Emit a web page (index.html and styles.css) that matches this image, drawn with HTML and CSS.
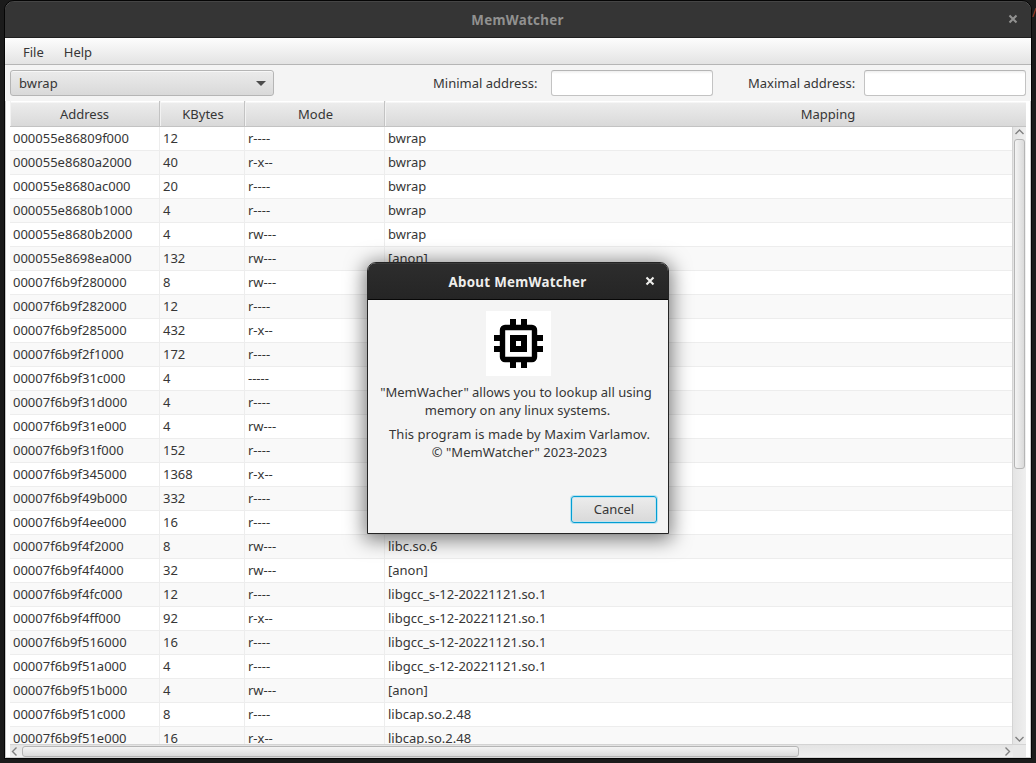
FILE: index.html
```html
<!DOCTYPE html>
<html lang="en">
<head>
<meta charset="utf-8">
<title>MemWatcher</title>
<link rel="stylesheet" href="styles.css">
</head>
<body>
<span class="backdrop-mark">/</span>
<main class="window">
  <header class="titlebar">
    <h1 class="title">MemWatcher</h1>
    <svg class="close" viewBox="0 0 10 10"><path d="M1.5 1.5L8.5 8.5M8.5 1.5L1.5 8.5"/></svg>
  </header>
  <nav class="menubar"><span class="menu-file">File</span><span>Help</span></nav>
  <section class="toolbar">
    <div class="combo">bwrap<i class="arrow"></i></div>
    <label class="min-label">Minimal address:</label><input class="field min-field">
    <label class="max-label">Maximal address:</label><input class="field max-field">
  </section>
  <section class="table">
    <div class="grid head"><div>Address</div><div>KBytes</div><div>Mode</div><div>Mapping</div></div>
    <div class="body">
      <div class="rows" id="rows"></div>
      <div class="vbar">
        <svg class="vchev" viewBox="0 0 13 12"><path d="M2.5 7L6.5 3L10.5 7"/></svg>
        <div class="vtrack"><div class="vthumb"></div></div>
        <svg class="vchev" viewBox="0 0 13 12"><path d="M2.5 5L6.5 9L10.5 5"/></svg>
      </div>
    </div>
    <div class="hbar">
      <svg class="hchev" viewBox="0 0 12 13"><path d="M6.5 2.5L2.5 6.5L6.5 10.5"/></svg>
      <div class="htrack"><div class="hthumb"></div></div>
      <svg class="hchev" viewBox="0 0 12 13"><path d="M4.5 2.5L8.5 6.5L4.5 10.5"/></svg>
      <div class="corner"></div>
    </div>
  </section>
</main>
<div class="dialog" role="dialog">
  <header class="dialog-title">
    <h2 class="title">About MemWatcher</h2>
    <svg class="close" viewBox="0 0 10 10"><path d="M1.5 1.5L8.5 8.5M8.5 1.5L1.5 8.5"/></svg>
  </header>
  <div class="dialog-body">
    <svg class="chip" viewBox="0 0 65 65">
      <path fill="#fff" d="M0 0h65v65H0z"/>
      <path d="M24 8h6v8h-6zM35 8h6v8h-6zM24 49h6v8h-6zM35 49h6v8h-6zM8 24h8v6H8zM8 35h8v6H8zM49 24h8v6h-8zM49 35h8v6h-8z"/>
      <rect x="16.5" y="16.5" width="32" height="32" rx="2.5" fill="none" stroke="#000" stroke-width="5.4"/>
      <path fill-rule="evenodd" d="M24 24h17v17H24zM30 30v5h5v-5z"/>
    </svg>
    <p class="about">"MemWacher" allows you to lookup all using<br><span class="second">memory on any linux systems.</span></p>
    <p class="credit">This program is made by Maxim Varlamov.<br>© "MemWatcher" 2023-2023</p>
    <button class="cancel">Cancel</button>
  </div>
</div>
<script src="rows.js"></script>
</body>
</html>
```
FILE: styles.css
```css
* { box-sizing: border-box; }
body { margin: 0; width: 1036px; height: 763px; overflow: hidden; position: relative; background: #1b1b1b; font: 13px/18px "Noto Sans", sans-serif; color: #363636; }
.backdrop-mark { position: absolute; left: 1032px; top: 4px; color: #a8402c; font-size: 12px; }
h1, h2, p { margin: 0; }
svg { display: block; flex: none; }
.window { position: relative; margin: 1px 5px 0; height: 757px; display: flex; flex-direction: column; background: #f4f4f4; border-radius: 9px 9px 0 0; overflow: hidden; outline: 1px solid #050505; }
.titlebar { height: 37px; flex: none; display: flex; align-items: center; background: #353535; border-top: 1px solid #454545; border-bottom: 1px solid #202020; color: #919190; padding: 0 13px 0 18px; }
.titlebar .close { margin-top: -1px; }
.title { flex: 1; text-align: center; font: bold 13.33px/18px "Noto Sans", sans-serif; letter-spacing: .3px; padding-left: 4px; }
.close { width: 10px; height: 10px; fill: none; stroke: currentColor; stroke-width: 2.1; }
.menubar { height: 27px; flex: none; display: flex; gap: 20px; align-items: center; padding-left: 18px; padding-top: 1px; background: linear-gradient(#fdfdfd, #e3e3e3); border-bottom: 1px solid #b5b5b5; }
.toolbar { height: 36px; flex: none; display: flex; align-items: center; padding: 0 5px; }
.combo { width: 264px; height: 26px; display: flex; align-items: center; justify-content: space-between; padding: 0 7px 0 8px; border: 1px solid #b5b5b5; border-radius: 3px; background: linear-gradient(#ebebeb, #d9d9d9); box-shadow: inset 0 1px #f7f7f7; letter-spacing: .1px; }
.arrow { border: 5px solid transparent; border-top-color: #4c4c4c; border-bottom: 0; }
.min-label { margin-left: 159px; width: 118px; }
.max-label { margin-left: 35px; width: 116px; }
.field { width: 162px; height: 26px; padding: 0 7px; border: 1px solid #c3c3c3; border-top-color: #b5b5b5; border-radius: 3px; background: linear-gradient(#eee, #fff 3px); outline: 0; }
.table { flex: 1; min-height: 0; padding: 0 4px; border: 1px solid #c8c8c8; border-top: 0; border-bottom-color: #d4d4d4; background: #fff; display: flex; flex-direction: column; }
.grid { display: grid; grid-template-columns: 150px 85px 140px 885px; }
.head { height: 26px; flex: none; overflow: hidden; border-bottom: 1px solid #c3c3c3; background: linear-gradient(#fff 1px, #ececec 2px, #d9d9d9); text-align: center; line-height: 27px; }
.head div { border-right: 1px solid #c3c3c3; box-shadow: inset 1px 0 #f2f2f2; }
.head div + div { padding-left: 2px; }
.body { flex: 1; min-height: 0; display: flex; }
.rows { flex: 1; min-width: 0; overflow: hidden; }
.row { height: 24px; line-height: 22px; border-bottom: 1px solid #ededed; width: 1260px; background: #fff; }
.row:nth-child(even) { background: #f9f9f9; }
.row div { padding-left: 3px; height: 23px; border-right: 1px solid #ededed; white-space: nowrap; }
.vbar { width: 14px; flex: none; display: flex; flex-direction: column; border-left: 1px solid #d4d4d4; background: linear-gradient(90deg, #e4e4e4, #efefef); }
.vchev { width: 13px; height: 12px; fill: none; stroke: #808080; stroke-width: 1.4; }
.vtrack { flex: 1; }
.vthumb { margin-left: 1px; width: 11px; height: 330px; border: 1px solid #b5b5b5; border-radius: 3px; background: linear-gradient(90deg, #f4f4f4, #dadada); }
.hbar { height: 13px; flex: none; display: flex; border-top: 1px solid #d4d4d4; background: linear-gradient(#e4e4e4, #efefef); }
.hchev { width: 12px; height: 13px; fill: none; stroke: #808080; stroke-width: 1.4; }
.htrack { flex: 1; padding-top: 1px; }
.hthumb { width: 777px; height: 11px; border: 1px solid #b5b5b5; border-radius: 3px; background: linear-gradient(#f4f4f4, #dadada); }
.corner { width: 13px; background: #e8e8e8; }
.dialog { position: absolute; left: 367px; top: 262px; width: 302px; height: 272px; border: 1px solid #242424; border-radius: 9px 9px 0 0; background: #f4f4f4; box-shadow: 0 3px 19px 3px rgba(0,0,0,.5); overflow: hidden; }
.dialog-title { height: 37px; display: flex; align-items: center; padding: 0 13px 0 18px; color: #eeeeec; background: linear-gradient(#2d2d2d, #252525); border-top: 1px solid #3a3a3a; border-bottom: 1px solid #070707; }
.dialog-title .close { margin-top: -2px; }
.dialog-body { display: flex; flex-direction: column; align-items: center; padding-top: 11px; text-align: center; }
.chip { width: 65px; height: 65px; margin-left: 1px; }
.about { margin-top: 7px; margin-right: 4px; white-space: nowrap; }
.second { padding-left: 3px; }
.credit { margin-top: 6px; margin-left: 3px; white-space: nowrap; letter-spacing: .05px; }
.cancel { align-self: flex-end; margin: 35px 11px 0 0; width: 86px; height: 27px; border: 1px solid #039ed3; border-radius: 3px; background: linear-gradient(#ececec, #d9d9d9); box-shadow: 0 0 0 1px #b8e2f0, inset 0 0 0 1px #c4e3ed; font: inherit; color: inherit; padding: 0 0 2px; }
```
FILE: rows.js
```js
const data = `000055e86809f000|12|r----|bwrap
000055e8680a2000|40|r-x--|bwrap
000055e8680ac000|20|r----|bwrap
000055e8680b1000|4|r----|bwrap
000055e8680b2000|4|rw---|bwrap
000055e8698ea000|132|rw---|[anon]
00007f6b9f280000|8|rw---|
00007f6b9f282000|12|r----|
00007f6b9f285000|432|r-x--|
00007f6b9f2f1000|172|r----|
00007f6b9f31c000|4|-----|
00007f6b9f31d000|4|r----|
00007f6b9f31e000|4|rw---|
00007f6b9f31f000|152|r----|
00007f6b9f345000|1368|r-x--|
00007f6b9f49b000|332|r----|
00007f6b9f4ee000|16|r----|
00007f6b9f4f2000|8|rw---|libc.so.6
00007f6b9f4f4000|32|rw---|[anon]
00007f6b9f4fc000|12|r----|libgcc_s-12-20221121.so.1
00007f6b9f4ff000|92|r-x--|libgcc_s-12-20221121.so.1
00007f6b9f516000|16|r----|libgcc_s-12-20221121.so.1
00007f6b9f51a000|4|r----|libgcc_s-12-20221121.so.1
00007f6b9f51b000|4|rw---|[anon]
00007f6b9f51c000|8|r----|libcap.so.2.48
00007f6b9f51e000|16|r-x--|libcap.so.2.48`;
const rows = document.getElementById('rows');
for (const line of data.split('\n')) {
  const row = document.createElement('div');
  row.className = 'grid row';
  for (const text of line.split('|')) {
    const cell = document.createElement('div');
    cell.textContent = text;
    row.append(cell);
  }
  rows.append(row);
}
```
